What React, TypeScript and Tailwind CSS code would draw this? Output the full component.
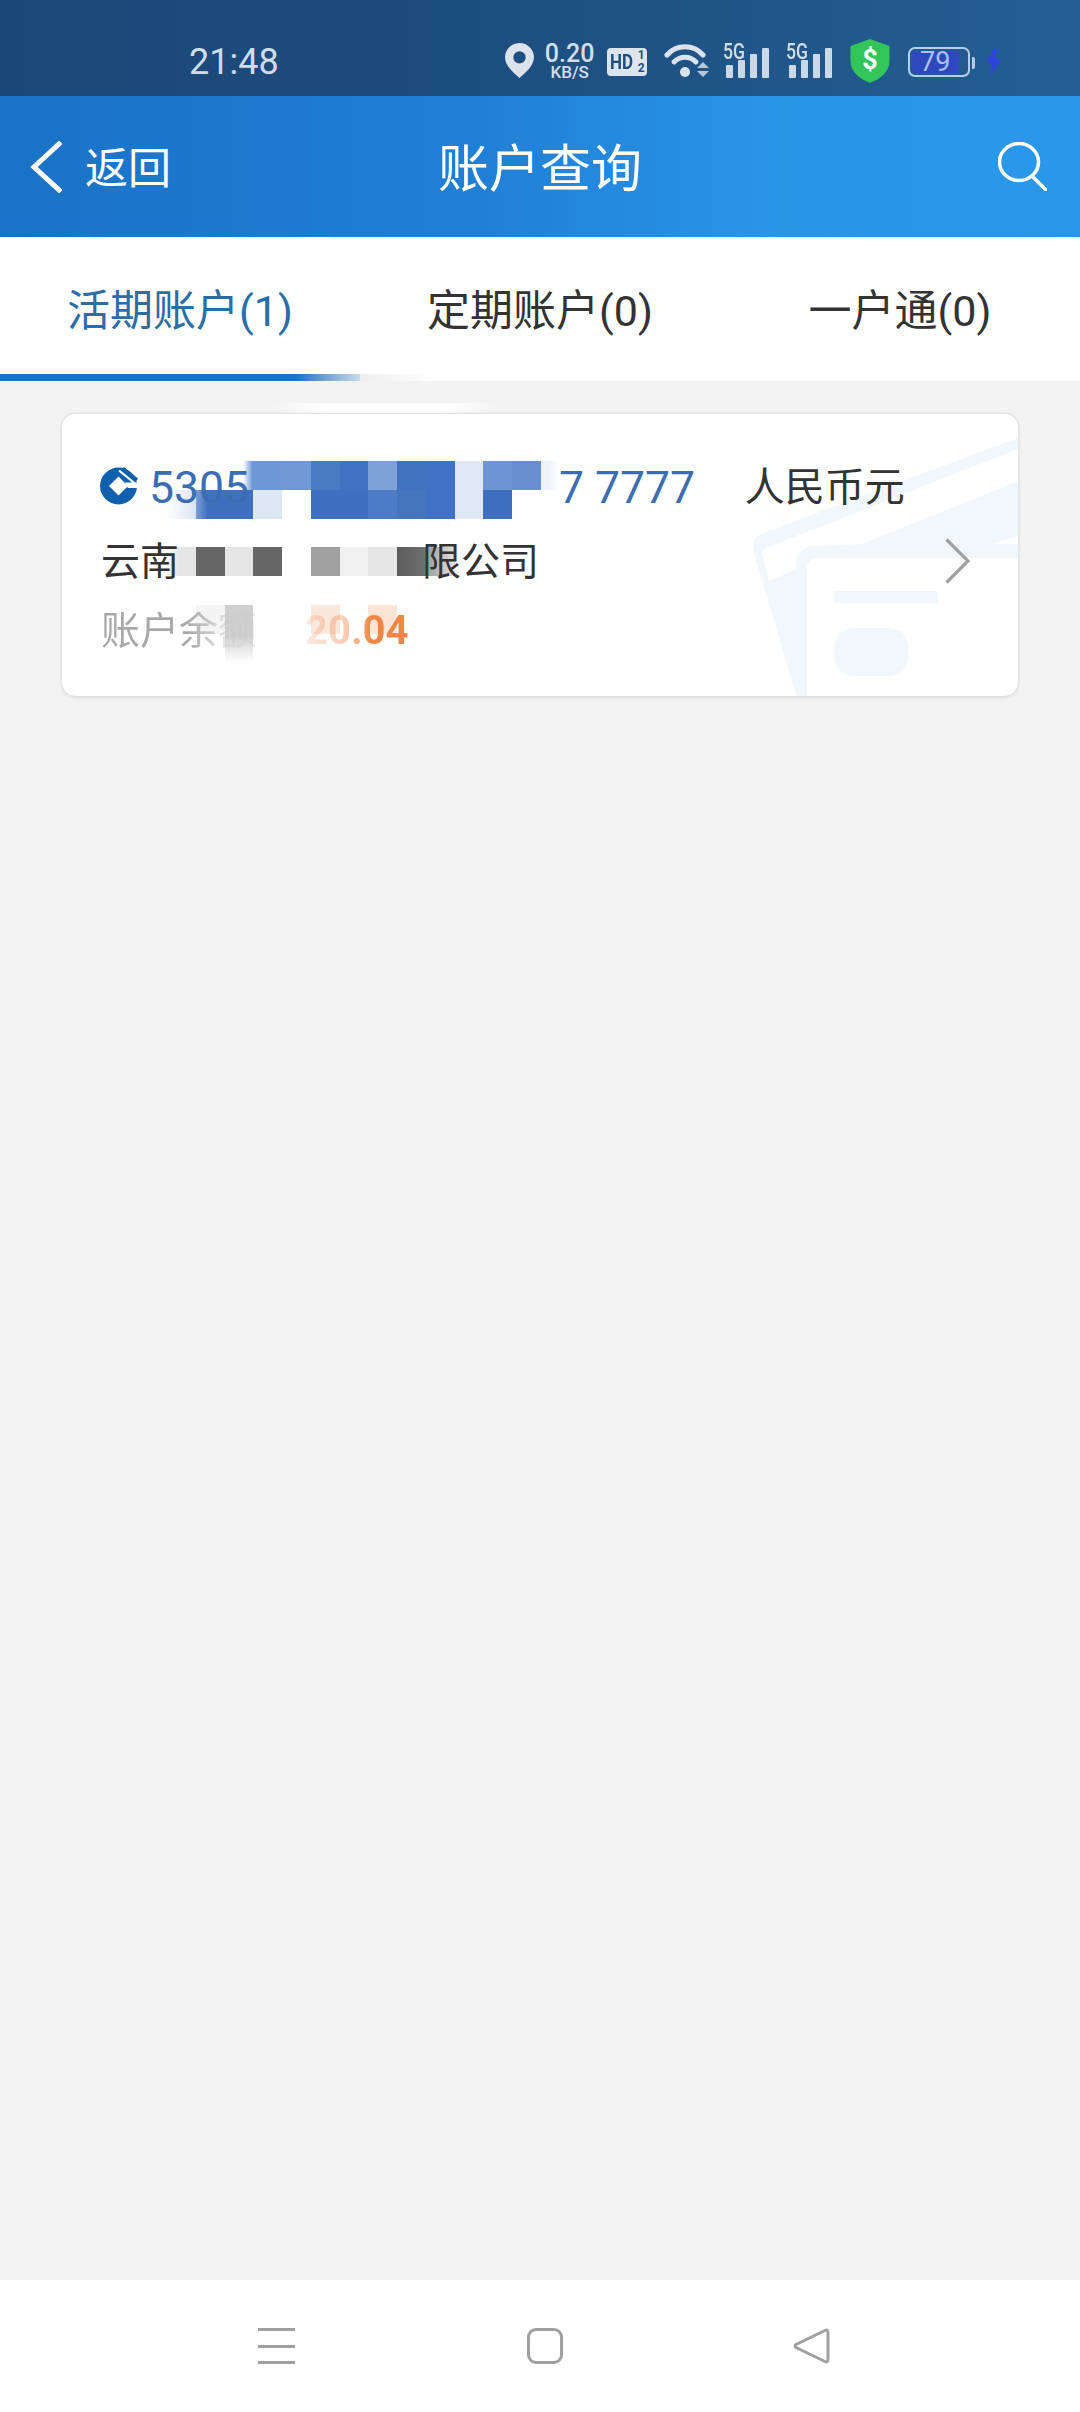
const M = ["#6e98d4", "#7099d4", "#4a7cc4", "#3f72c3", "#7ea1d8", "#4172c0", "#3f72c4", "#dfe8f4", "#6f96d3", "#6890d0"];

const mosaic: [number, number, string][] = [
  [2, 0, "linear-gradient(90deg,rgba(110,152,212,0) 65%,#6e98d4 98%)"],
  ...M.map((c, i): [number, number, string] => [3 + i, 0, c]),
  [13, 0, "linear-gradient(90deg,#f0f4fa 30%,rgba(240,244,250,0) 62%)"],
  [0, 1, "linear-gradient(90deg,rgba(225,232,244,0),#dbe4f2)"],
  [1, 1, "linear-gradient(90deg,#7f9fd4,#3f70c0 40%)"],
  [2, 1, "#3f70c0"],
  [3, 1, "#dde8f4"],
  [5, 1, "#3f6fc0"],
  [6, 1, "#3f6fc0"],
  [7, 1, "#4d7cc6"],
  [8, 1, "#4475bd"],
  [9, 1, "#3f72c4"],
  [10, 1, "#dfe8f4"],
  [11, 1, "#3f6fc0"],
  [0, 3, "linear-gradient(90deg,rgba(230,230,230,0.2),#e6e6e6 40%)"],
  [1, 3, "#666666"],
  [2, 3, "#e6e6e6"],
  [3, 3, "#666666"],
  [5, 3, "#a0a0a0"],
  [6, 3, "#f0f0f0"],
  [7, 3, "#e6e6e6"],
  [8, 3, "linear-gradient(90deg,#5c5c5c,#707070)"],
  [9, 3, "linear-gradient(90deg,#9a9a9a,#e4e4e4)"],
  [1, 5, "#f4f4f4"],
  [2, 5, "#cfcfcf"],
  [5, 5, "#fbe8dd"],
  [7, 5, "#fde4d4"],
  [2, 6, "linear-gradient(180deg,#cccccc,rgba(255,255,255,0))"],
];

function Bars() {
  return (
    <div className="relative h-[34px] w-[46px]">
      <span className="absolute left-0 top-[-1px] origin-top-left scale-x-[0.8] text-[22px] font-medium leading-[18px] text-[#d3deea]">5G</span>
      <svg className="absolute left-0 top-0" width="46" height="34" viewBox="0 0 46 34" fill="#cbd8e6">
        <rect x="3" y="21" width="7" height="13" rx="1" />
        <rect x="15" y="16" width="7" height="18" rx="1" />
        <rect x="27" y="10" width="7" height="24" rx="1" />
        <rect x="39" y="4" width="7" height="30" rx="1" />
      </svg>
    </div>
  );
}

export default function App() {
  return (
    <div className="flex h-[2412px] w-[1080px] flex-col overflow-hidden bg-[#f4f3f4] font-['Roboto','Noto_Sans_CJK_SC',sans-serif]">
      {/* status bar */}
      <div className="flex h-[96px] items-start bg-[linear-gradient(90deg,#1b4776,#1d4e80_45%,#235f93)] text-[#d3deea]">
        <span className="ml-[189px] mt-[42px] text-[36px] leading-[40px] text-[#d0dcec]">21:48</span>
        <svg className="ml-[226px] mt-[43px]" width="29" height="35" viewBox="0 0 29 35">
          <path fillRule="evenodd" fill="#dde3ec" d="M14.5 0C6.5 0 0 6.4 0 14.3 0 23.5 10 31 14.5 35 19 31 29 23.5 29 14.3 29 6.4 22.5 0 14.5 0Zm0 8.2a6.2 6.2 0 1 1 0 12.4 6.2 6.2 0 0 1 0-12.4Z" />
        </svg>
        <div className="ml-[11px] mt-[43px] flex w-[50px] flex-col items-center">
          <span className="h-[21px] text-[25px] font-medium leading-[21px]">0.20</span>
          <span className="text-[17px] font-medium leading-[16px]">KB/S</span>
        </div>
        <div className="relative ml-[12px] mt-[48px] flex h-[28px] w-[40px] items-center rounded-[4px] bg-[#dde4ee] pl-[3px] text-[#1d4e80]">
          <span className="origin-left scale-x-[0.85] text-[20px] font-bold leading-none">HD</span>
          <span className="absolute right-[2px] top-[1px] flex flex-col text-[12px] font-bold leading-[13px]">
            <span>1</span>
            <span>2</span>
          </span>
        </div>
        <svg className="ml-[17px] mt-[43px]" width="46" height="35" viewBox="0 0 46 35" fill="none">
          <g stroke="#dbe4ee" strokeWidth="5" strokeLinecap="round">
            <path d="M3 12A24 24 0 0 1 39 12" />
            <path d="M10 19A15 15 0 0 1 32 19" />
          </g>
          <circle cx="21" cy="29" r="5" fill="#dbe4ee" />
          <path d="M33 25h12l-6-6ZM33 28h12l-6 6Z" fill="#b7c7d9" />
        </svg>
        <div className="ml-[13px] mt-[44px]"><Bars /></div>
        <div className="ml-[17px] mt-[44px]"><Bars /></div>
        <svg className="ml-[18px] mt-[39px]" width="40" height="44" viewBox="0 0 40 44">
          <path fill="#33c45a" d="M20 0 39.5 7V22C39.5 33 30 40 20 44 10 40 .5 33 .5 22V7Z" />
          <text x="20" y="30" textAnchor="middle" fontSize="27" fontWeight="700" fill="#ffffff">$</text>
        </svg>
        <div className="relative ml-[18px] mt-[47px] flex h-[30px] w-[62px] items-center rounded-[7px] border-[2.5px] border-[#b5cde8] p-[2px]">
          <div className="flex h-full w-[47px] items-center justify-center rounded-[3px] bg-[#2f49bd] text-[27px] leading-none text-[#a9c0f2]">79</div>
          <div className="absolute right-[-7px] top-[8px] h-[12px] w-[3px] rounded-r-[2px] bg-[#b5cde8]" />
        </div>
        <svg className="ml-[15px] mt-[47px]" width="18" height="29" viewBox="0 0 18 29">
          <path fill="#2e43e0" d="M10 0 2 14 7 17 5 29 16 13 10 11Z" />
        </svg>
      </div>

      {/* header */}
      <div className="grid h-[141px] grid-cols-3 items-center bg-[linear-gradient(90deg,#1a72c6,#2080d6_45%,#2a96e6_72%,#2a97e8)] text-white">
        <div className="flex items-center pl-[30px]">
          <svg width="32" height="52" viewBox="0 0 32 52" fill="none">
            <path d="M29 3 4 26 29 49" stroke="#ffffff" strokeWidth="5" strokeLinecap="square" />
          </svg>
          <span className="ml-[23px] pt-[5px] text-[43px] leading-none">返回</span>
        </div>
        <div className="pt-[5px] text-center text-[51px] leading-none">账户查询</div>
        <div className="flex justify-end pr-[33px]">
          <svg width="49" height="49" viewBox="0 0 49 49" fill="none" stroke="#ffffff" strokeWidth="3.5">
            <ellipse cx="21" cy="20" rx="19.5" ry="18.5" />
            <path d="M34 34 47.5 47.5" strokeLinecap="round" />
          </svg>
        </div>
      </div>

      {/* tabs */}
      <div className="relative grid h-[144px] grid-cols-3 bg-white pt-[5px] text-[43px] leading-none text-[#333333]">
        <div className="flex items-center justify-center text-[#2a6ea8]">活期账户(1)</div>
        <div className="flex items-center justify-center">定期账户(0)</div>
        <div className="flex items-center justify-center">一户通(0)</div>
        <div className="absolute bottom-0 left-0 h-[7px] w-[360px] bg-[linear-gradient(90deg,#1f70bb_82%,#c9dcee)]" />
        <div className="absolute bottom-0 left-[360px] h-[7px] w-[70px] bg-[linear-gradient(90deg,#eeeeee,#ffffff)]" />
      </div>

      {/* card */}
      <div className="relative flex-1 px-[62px] pt-[32px]">
        <div className="absolute left-[270px] top-[22px] h-[12px] w-[230px] bg-[linear-gradient(90deg,rgba(255,255,255,0),#ffffff_25%,#ffffff_75%,rgba(255,255,255,0))]" />
        <div className="relative h-[283px] overflow-hidden rounded-[14px] border-t border-[#e4e4e4] bg-white shadow-[0_1px_4px_rgba(0,0,0,0.14)]">
          <svg className="absolute left-0 top-0" width="956" height="283" viewBox="62 413 956 283">
            <g fill="#f1f8fd">
              <path d="M1018 437 763 532Q750 538 754 552L796 693V568L769 580 762 553Q761 549 766 547L1018 448Z" />
              <path d="M862 543 1018 480V535L991 543H1018V557H818Q807 557 807 568V696H796V566Q796 545 815 545Z" />
              <rect x="834" y="590" width="104" height="12" rx="2" />
              <rect x="834" y="627" width="74" height="48" rx="20" />
            </g>
          </svg>
          <div className="absolute left-[105px] top-[47px] grid grid-cols-[repeat(14,28.75px)] grid-rows-[repeat(7,28.75px)]">
            {mosaic.map(([c, r, bg]) => (
              <div key={`${c}-${r}`} style={{ gridColumnStart: c + 1, gridRowStart: r + 1, background: bg }} />
            ))}
          </div>

          <svg className="absolute right-[48px] top-[124px]" width="25" height="46" viewBox="0 0 25 46" fill="none">
            <path d="M1.5 1.5 23 23 1.5 44.5" stroke="#a0a0a0" strokeWidth="3.2" />
          </svg>

          <div className="relative ml-[38px] mt-[45px] flex h-[58px] items-center">
            <svg className="mb-[6px]" width="38" height="39" viewBox="0 0 38 39">
              <circle cx="18.5" cy="20" r="18.5" fill="#0f60ad" />
              <path fill="#ffffff" d="M18.500 10.500 28 20 18.500 29.500 9 20Z" />
              <path fill="#ffffff" d="M25 16.500 36 16.500 40 22H28Z" />
              <path stroke="#ffffff" strokeWidth="2.2" fill="none" d="M19 4.500 35 17.500" />
              <path fill="#0f60ad" d="M24 1 38 12.500 36 15.500 21.500 3.500Z" />
            </svg>
            <span className="ml-[11px] text-[44.5px] leading-none text-[#3b6db2]">5305</span>
            <span className="ml-[310px] text-[44.5px] leading-none text-[#3b6db2]">7 7777</span>
            <span className="ml-[49.5px] text-[40px] leading-none text-[#333333]">人民币元</span>
          </div>
          <div className="relative ml-[39px] mt-[16px] flex h-[58px] items-center text-[39px] leading-none text-[#333333]">
            <span>云南</span>
            <span className="ml-[243px]">限公司</span>
          </div>
          <div className="relative ml-[39px] mt-[11px] flex h-[58px] items-center leading-none">
            <span className="bg-[linear-gradient(90deg,#a8a8a8_55%,rgba(200,200,200,0.35)_82%)] bg-clip-text text-[39px] text-transparent">账户余额</span>
            <span className="ml-[48px] bg-[linear-gradient(90deg,rgba(240,150,100,0.2),rgba(240,140,85,0.45)_40%,#ef8645_65%)] bg-clip-text text-[40px] font-bold text-transparent">20.04</span>
          </div>
        </div>
      </div>

      {/* nav bar */}
      <div className="flex h-[132px] items-start bg-white pt-[48px]">
        <div className="ml-[258px] flex h-[36px] w-[37px] flex-col justify-between">
          <div className="h-[3px] bg-[#a0a0a0]" />
          <div className="h-[3px] bg-[#a0a0a0]" />
          <div className="h-[3px] bg-[#a0a0a0]" />
        </div>
        <div className="ml-[232px] h-[36px] w-[36px] rounded-[9px] border-[3px] border-[#a0a0a0]" />
        <svg className="ml-[230px]" width="37" height="36" viewBox="0 0 37 36" fill="none">
          <path d="M32 2.500 3 16.500Q1 18 3 19.500L32 33.500Q35 35 35 31V5Q35 1 32 2.500Z" stroke="#a0a0a0" strokeWidth="3" />
        </svg>
      </div>
    </div>
  );
}
